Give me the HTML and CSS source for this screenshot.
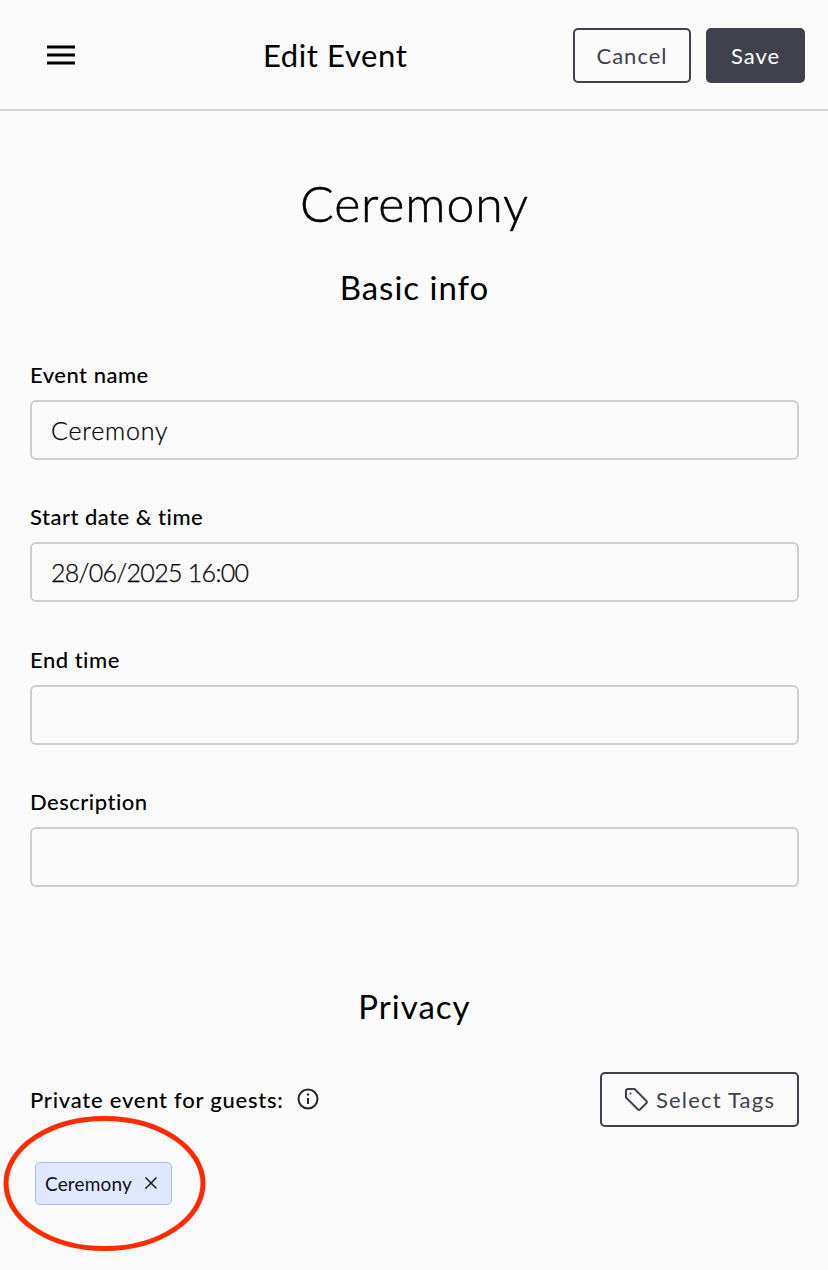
FILE: index.html
```html
<!DOCTYPE html>
<html>
<head>
<title>Edit Event</title>
<link rel="stylesheet" href="styles.css">
</head>
<body>

<header class="topbar">
  <button type="button" class="menu-btn" aria-label="Menu">
    <svg width="28" height="20" viewBox="0 0 28 20"><path d="M0 2h28M0 10h28M0 18h28" stroke="#000" stroke-width="3" fill="none"/></svg>
  </button>
  <div class="topbar-title">Edit Event</div>
  <div class="topbar-actions">
    <button type="button" class="btn btn-cancel">Cancel</button>
    <button type="button" class="btn btn-save">Save</button>
  </div>
</header>

<main class="content">
  <h1 class="event-title">Ceremony</h1>
  <h2 class="section-title">Basic info</h2>

  <form class="fields">
    <label class="field">
      <span class="field-label">Event name</span>
      <input type="text" class="field-input" value="Ceremony">
    </label>
    <label class="field">
      <span class="field-label">Start date &amp; time</span>
      <input type="text" class="field-input date-input" value="28/06/2025 16:00">
    </label>
    <label class="field">
      <span class="field-label">End time</span>
      <input type="text" class="field-input">
    </label>
    <label class="field">
      <span class="field-label">Description</span>
      <input type="text" class="field-input">
    </label>
  </form>

  <h2 class="section-title privacy-title">Privacy</h2>

  <div class="privacy-row">
    <div class="privacy-label">
      <span>Private event for guests:</span>
      <svg class="info-icon" width="22" height="22" viewBox="0 0 22 22" fill="none" stroke="#26262e" stroke-width="2">
        <circle cx="11" cy="11" r="9.5"/>
        <path d="M11 10v6"/>
        <circle cx="11" cy="6.5" r="1.2" fill="#26262e" stroke="none"/>
      </svg>
    </div>
    <button type="button" class="btn btn-tags">
      <svg width="25" height="25" viewBox="0 0 25 25" fill="none" stroke="#41414e" stroke-width="2" stroke-linejoin="round">
        <path d="M2 4a2 2 0 0 1 2-2h6.500l12 12a1.500 1.500 0 0 1 0 2l-6.500 6.500a1.500 1.500 0 0 1-2 0l-12-12z"/>
        <circle cx="6.500" cy="6.500" r="1" fill="#41414e" stroke="none"/>
      </svg>
      Select Tags
    </button>
  </div>

  <div class="tags">
    <span class="tag">Ceremony
      <svg width="14" height="14" viewBox="0 0 14 14"><path d="M1.500 1.500l11 11M12.500 1.500l-11 11" stroke="#1a1a22" stroke-width="1.500" fill="none"/></svg>
    </span>
  </div>
</main>

<svg class="annotation" width="212" height="140" viewBox="0 0 212 140">
  <ellipse cx="104.500" cy="67.500" rx="98.500" ry="65" fill="none" stroke="#ff2a00" stroke-width="5"/>
</svg>

</body>
</html>
```

FILE: styles.css
```css
* {
  box-sizing: border-box;
}
html, body {
  margin: 0;
  padding: 0;
}
body {
  position: relative;
  height: 1270px;
  overflow: hidden;
  background: #fafafa;
  color: #000;
  font-family: "Lato", "Open Sans", sans-serif;
}
button {
  font-family: inherit;
  cursor: pointer;
}

/* top bar */
.topbar {
  position: relative;
  height: 111px;
  display: flex;
  align-items: center;
  justify-content: space-between;
  padding: 0 23px 0 47px;
  border-bottom: 2px solid #d6d4d2;
}
.menu-btn {
  padding: 0;
  border: 0;
  background: none;
  display: flex;
}
.topbar-title {
  position: absolute;
  left: 263px;
  top: 35px;
  font-size: 31px;
  line-height: 40px;
  letter-spacing: 0.6px;
}
.topbar-actions {
  display: flex;
  gap: 15px;
  margin-top: 1px;
}
.btn {
  height: 55px;
  border-radius: 5px;
  font-size: 22px;
  letter-spacing: 1px;
  color: #41414e;
  background: transparent;
  border: 2px solid #41414e;
}
.btn-cancel {
  width: 118px;
}
.btn-save {
  width: 99px;
  background: #41414e;
  color: #fff;
}

/* main */
.content {
  padding: 0 29px 0 30px;
}
.event-title {
  margin: 61px 0 0;
  font-size: 50px;
  line-height: 62px;
  font-weight: 300;
  -webkit-text-stroke: 0.5px #000;
  text-align: center;
  letter-spacing: 0.9px;
}
.section-title {
  margin: 32px 0 0;
  font-size: 33px;
  line-height: 42px;
  font-weight: 400;
  text-align: center;
  letter-spacing: 1px;
}
.fields {
  display: flex;
  flex-direction: column;
  gap: 43.300px;
  margin-top: 53px;
}
.field {
  display: block;
}
.field-label {
  display: block;
  font-size: 22px;
  line-height: 28px;
  font-weight: 500;
  letter-spacing: 0.5px;
  margin-bottom: 11px;
}
.field-input {
  display: block;
  width: 100%;
  height: 60px;
  padding: 0 19px;
  border: 2px solid #cdcdcd;
  border-radius: 6px;
  background: #fafafa;
  font-family: inherit;
  font-size: 25px;
  font-weight: 300;
  letter-spacing: 0.8px;
  color: #000;
  -webkit-text-stroke: 0.25px #000;
}
.date-input {
  letter-spacing: -0.700px;
}
.privacy-title {
  margin-top: 98px;
}
.privacy-row {
  display: flex;
  justify-content: space-between;
  align-items: center;
  margin-top: 45px;
}
.privacy-label {
  display: flex;
  align-items: center;
  gap: 13px;
  font-size: 22px;
  letter-spacing: 0.76px;
  font-weight: 500;
}
.btn-tags {
  width: 199px;
  display: flex;
  align-items: center;
  justify-content: center;
  gap: 7px;
  padding: 0;
  letter-spacing: 1.200px;
}
.tags {
  display: flex;
  margin-top: 35px;
  padding-left: 5px;
}
.tag {
  display: inline-flex;
  align-items: center;
  gap: 12px;
  height: 43px;
  padding: 0 13px 0 9px;
  background: #e0e8ff;
  border: 1px solid #a8b8f0;
  border-radius: 5px;
  font-size: 19px;
  letter-spacing: 0.15px;
  color: #111;
}

/* red hand drawn circle on top of the screenshot */
.annotation {
  position: absolute;
  left: 0;
  top: 1116px;
}
```
